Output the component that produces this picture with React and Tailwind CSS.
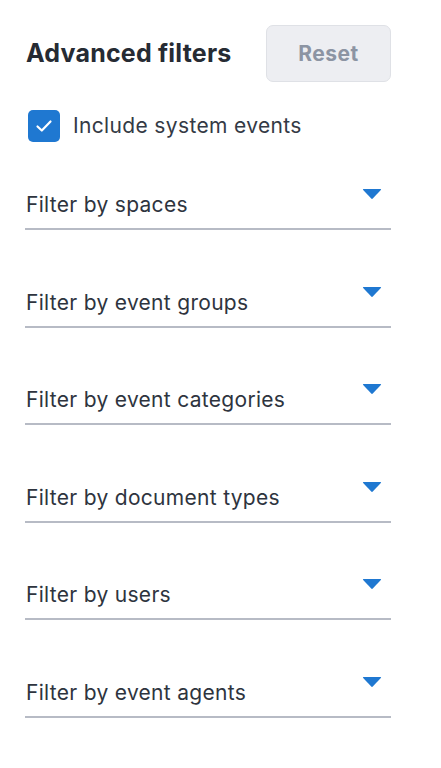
import React from 'react';

const filters = [
  'Filter by spaces',
  'Filter by event groups',
  'Filter by event categories',
  'Filter by document types',
  'Filter by users',
  'Filter by event agents',
];

const Caret = () => (
  <svg width="20" height="12" viewBox="0 0 20 12" className="block">
    <path d="M1.5 1 H18.5 Q19.6 1 18.8 1.9 L10.8 10.6 Q10 11.4 9.2 10.6 L1.2 1.9 Q0.4 1 1.5 1 Z" fill="#1f78d1" />
  </svg>
);

const App = () => {
  return (
    <div className="min-h-screen bg-white font-['Inter',sans-serif]">
      <div className="w-[366px] ml-[25px] pt-[25px]">
        {/* header */}
        <div className="flex items-center justify-between h-[57px]">
          <h1 className="text-[25px] font-bold text-[#262b33] ml-[1px] tracking-[0.2px]">Advanced filters</h1>
          <button className="w-[125px] h-[57px] rounded-[7px] border border-[#dfe1e6] bg-[#edeef2] text-[21px] font-bold tracking-[0.5px] text-[#8c94a3]">
            Reset
          </button>
        </div>

        {/* checkbox */}
        <label className="flex items-center mt-[28px] ml-[3px] h-[32px]">
          <span className="w-[32px] h-[32px] rounded-[5px] bg-[#1f78d1] flex items-center justify-center">
            <svg width="18" height="14" viewBox="0 0 18 14">
              <path d="M2.5 7.5 L6.8 11.5 L15.5 2.5" stroke="white" strokeWidth="2.2" fill="none" strokeLinecap="round" strokeLinejoin="round" />
            </svg>
          </span>
          <span className="ml-[13px] text-[21px] tracking-[0.35px] text-[#343a45]">Include system events</span>
        </label>

        {/* dropdown filters */}
        <div className="mt-[32px] flex flex-col gap-[41.6px]">
          {filters.map((label) => (
            <div key={label} className="h-[56px] flex items-start justify-between border-b-2 border-[#b7bbc5]">
              <span className="pt-[19px] pl-[1px] text-[21px] leading-[24px] tracking-[0.3px] text-[#2e343e]">{label}</span>
              <span className="pt-[14px] mr-[9px]">
                <Caret />
              </span>
            </div>
          ))}
        </div>
      </div>
    </div>
  );
};

export default App;
